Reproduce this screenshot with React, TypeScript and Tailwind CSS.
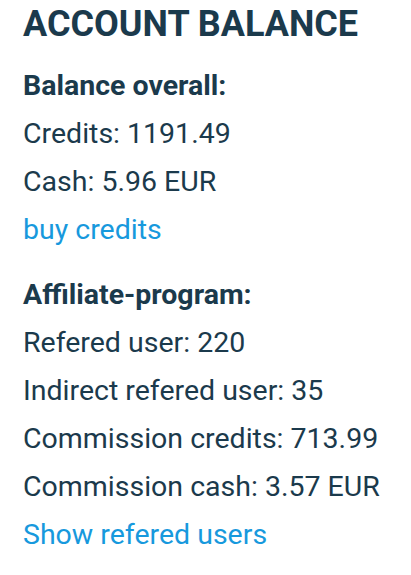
export default function App() {
  return (
    <div className="min-h-[575px] w-[411px] bg-white pl-[23px] pt-[3px] font-['Roboto',sans-serif] text-[#1b3a4c]">
      <h1 className="text-[36px] font-bold leading-[43px]">ACCOUNT BALANCE</h1>
      <div className="mt-4 text-[28.5px] leading-[48px]">
        <div className="font-bold">Balance overall:</div>
        <div>Credits: 1191.49</div>
        <div>Cash: 5.96 EUR</div>
        <a className="block text-[#1799dd]" href="#">buy credits</a>
      </div>
      <div className="mt-[17px] text-[28.5px] leading-[48px]">
        <div className="font-bold">Affiliate-program:</div>
        <div>Refered user: 220</div>
        <div>Indirect refered user: 35</div>
        <div>Commission credits: 713.99</div>
        <div>Commission cash: 3.57 EUR</div>
        <a className="block text-[#1799dd]" href="#">Show refered users</a>
      </div>
    </div>
  );
}
